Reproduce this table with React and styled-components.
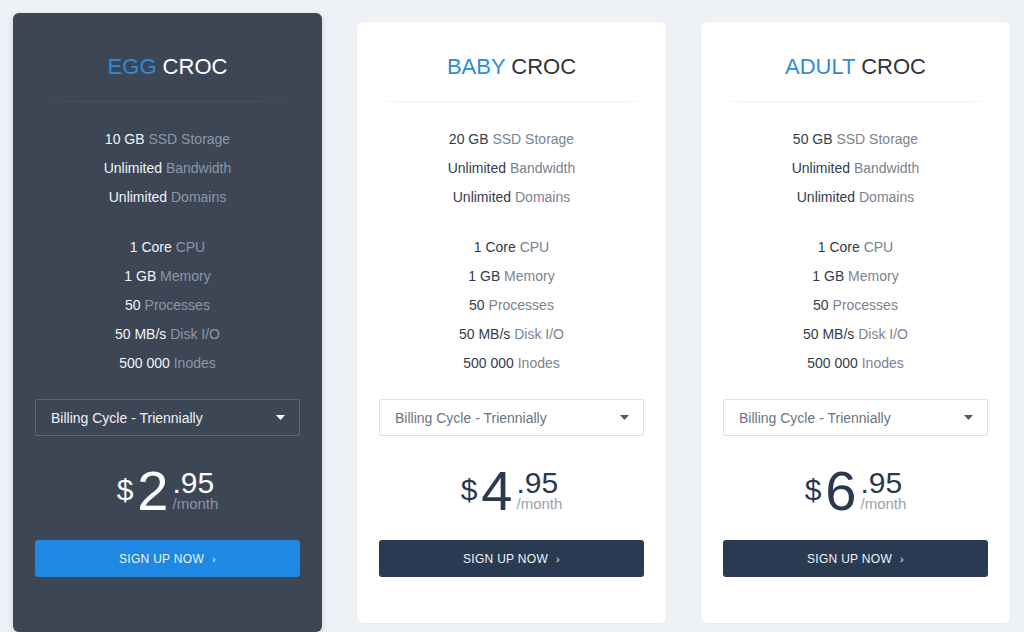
import React from 'react'
import styled, { createGlobalStyle, css } from 'styled-components'

const GlobalStyle = createGlobalStyle`
    html, body {
        margin: 0;
        padding: 0;
        background: #eef1f6;
        font-family: "Liberation Sans", Arial, sans-serif;
        overflow: hidden;
    }
`;

const Plans = styled.div`
    display: flex;
    align-items: flex-start;
    gap: 35px;
    padding: 13px 0 0 13px;
    height: 632px;
    box-sizing: border-box;
`;

const Card = styled.div`
    width: 309px;
    box-sizing: border-box;
    border-radius: 6px;
    display: flex;
    flex-direction: column;
    text-align: center;
    padding: 32px 22px 46px;
    margin-top: 9px;
    background: #ffffff;
    box-shadow: 0 1px 3px rgba(40, 55, 80, 0.05);

    ${p => p.$featured && css`
        background: #3c4655;
        padding: 41px 22px 55px;
        margin-top: 0;
        box-shadow: 0 2px 6px rgba(20, 30, 45, 0.15);
    `}
`;

const Title = styled.h2`
    margin: 0;
    font-size: 22px;
    line-height: 26px;
    font-weight: normal;
    color: ${p => p.$featured ? '#ffffff' : '#2c3441'};

    span {
        color: #2f8bd6;
    }
`;

const Divider = styled.div`
    height: 1px;
    margin: 21px 0 23px;
    background: ${p => p.$featured
        ? 'linear-gradient(90deg, rgba(255,255,255,0), rgba(255,255,255,0.06) 20%, rgba(255,255,255,0.06) 80%, rgba(255,255,255,0))'
        : 'linear-gradient(90deg, rgba(225,230,236,0.3), #eceff3 20%, #eceff3 80%, rgba(225,230,236,0.3))'};
`;

const Features = styled.ul`
    list-style: none;
    margin: 0;
    padding: 0;

    & + & {
        margin-top: 21px;
    }
`;

const Feature = styled.li`
    font-size: 14px;
    line-height: 29px;
    color: ${p => p.$featured ? '#8d97a6' : '#7a838f'};

    b {
        font-weight: normal;
        color: ${p => p.$featured ? '#f2f4f7' : '#343c48'};
    }
`;

const Select = styled.div`
    margin-top: 21px;
    height: 37px;
    box-sizing: border-box;
    display: flex;
    align-items: center;
    justify-content: space-between;
    padding: 0 14px 0 15px;
    border-radius: 2px;
    font-size: 14px;
    cursor: pointer;
    border: 1px solid ${p => p.$featured ? '#5e6776' : '#dcdfe4'};
    color: ${p => p.$featured ? '#eef1f5' : '#6b7480'};
`;

const Caret = styled.svg`
    width: 9px;
    height: 5px;
    fill: ${p => p.$featured ? '#ffffff' : '#555c66'};
`;

const Price = styled.div`
    margin-top: 27px;
    display: flex;
    justify-content: center;
    align-items: flex-start;
    height: 56px;
    color: ${p => p.$featured ? '#ffffff' : '#2a3850'};
`;

const Currency = styled.span`
    font-size: 30px;
    line-height: 1;
    margin-top: 12px;
    margin-right: 4px;
`;

const Whole = styled.span`
    font-size: 56px;
    line-height: 1;
    margin-right: 4px;
`;

const Fraction = styled.div`
    display: flex;
    flex-direction: column;
    align-items: flex-start;
    margin-top: 8px;

    strong {
        font-size: 30px;
        line-height: 24px;
        font-weight: normal;
    }

    small {
        font-size: 15px;
        line-height: 13px;
        margin-top: 2px;
        color: ${p => p.$featured ? '#8a94a3' : '#9aa2ad'};
    }
`;

const SignUp = styled.button`
    margin-top: 21px;
    height: 37px;
    border: none;
    border-radius: 3px;
    font-family: inherit;
    font-size: 12px;
    letter-spacing: 0.3px;
    text-transform: uppercase;
    cursor: pointer;
    background: ${p => p.$featured ? '#1e88e2' : '#293a52'};
    color: ${p => p.$featured ? '#eaf3fc' : '#f1f3f6'};

    span {
        margin-left: 8px;
        font-size: 11px;
    }
`;

const plans = [
    { level: 'EGG', storage: '10 GB', price: '2', featured: true },
    { level: 'BABY', storage: '20 GB', price: '4' },
    { level: 'ADULT', storage: '50 GB', price: '6' },
];

const Plan = ({ level, storage, price, featured }) => (
    <Card $featured={featured}>
        <Title $featured={featured}><span>{level}</span> CROC</Title>
        <Divider $featured={featured} />
        <Features>
            <Feature $featured={featured}><b>{storage}</b> SSD Storage</Feature>
            <Feature $featured={featured}><b>Unlimited</b> Bandwidth</Feature>
            <Feature $featured={featured}><b>Unlimited</b> Domains</Feature>
        </Features>
        <Features>
            <Feature $featured={featured}><b>1 Core</b> CPU</Feature>
            <Feature $featured={featured}><b>1 GB</b> Memory</Feature>
            <Feature $featured={featured}><b>50</b> Processes</Feature>
            <Feature $featured={featured}><b>50 MB/s</b> Disk I/O</Feature>
            <Feature $featured={featured}><b>500 000</b> Inodes</Feature>
        </Features>
        <Select $featured={featured}>
            Billing Cycle - Triennially
            <Caret $featured={featured} viewBox="0 0 9 5"><path d="M0 0h9L4.5 5z" /></Caret>
        </Select>
        <Price $featured={featured}>
            <Currency>$</Currency>
            <Whole>{price}</Whole>
            <Fraction $featured={featured}>
                <strong>.95</strong>
                <small>/month</small>
            </Fraction>
        </Price>
        <SignUp $featured={featured}>Sign up now<span>›</span></SignUp>
    </Card>
);

const App = () => (
    <>
        <GlobalStyle />
        <Plans>
            {plans.map(p => <Plan key={p.level} {...p} />)}
        </Plans>
    </>
);

export default App
